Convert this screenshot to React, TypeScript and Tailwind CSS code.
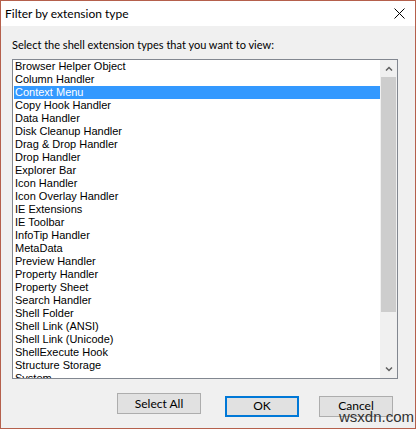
import React from "react";

const EXTENSION_TYPES = [
  "Browser Helper Object",
  "Column Handler",
  "Context Menu",
  "Copy Hook Handler",
  "Data Handler",
  "Disk Cleanup Handler",
  "Drag & Drop Handler",
  "Drop Handler",
  "Explorer Bar",
  "Icon Handler",
  "Icon Overlay Handler",
  "IE Extensions",
  "IE Toolbar",
  "InfoTip Handler",
  "MetaData",
  "Preview Handler",
  "Property Handler",
  "Property Sheet",
  "Search Handler",
  "Shell Folder",
  "Shell Link (ANSI)",
  "Shell Link (Unicode)",
  "ShellExecute Hook",
  "Structure Storage",
  "System",
  "Thumbnail Handler",
  "URL Search Hook",
];

const SELECTED = "Context Menu";
const UI_FONT = { fontFamily: 'Lato, "Liberation Sans", sans-serif' };

function Chevron({ up }: { up?: boolean }) {
  return (
    <svg width="8" height="5" viewBox="0 0 8 5" fill="none" stroke="#606060" strokeWidth="1.5" aria-hidden="true">
      <path d={up ? "M1 4.5 4 1.5 7 4.5" : "M1 0.5 4 3.5 7 0.5"} />
    </svg>
  );
}

function DialogButton({ label, primary, width }: { label: string; primary?: boolean; width: string }) {
  return (
    <button
      style={UI_FONT}
      className={`h-[21px] ${width} bg-[#e1e1e1] text-[12px] leading-none text-black ${
        primary ? "border-2 border-[#0078d7]" : "border border-[#adadad]"
      }`}
    >
      {label}
    </button>
  );
}

export default function App() {
  return (
    <div
      className="relative flex h-[429px] w-[416px] flex-col overflow-hidden border border-[#b5604c] bg-[#f0f0f0] text-black"
      style={{ fontFamily: '"Liberation Sans", Arial, sans-serif' }}
    >
      {/* title bar */}
      <div className="flex h-[25px] shrink-0 items-center justify-between bg-white pl-[4px] pr-[10px]">
        <span className="text-[12px]" style={UI_FONT}>
          Filter by extension type
        </span>
        <svg width="11" height="11" viewBox="0 0 11 11" stroke="#000" strokeWidth="1" aria-hidden="true">
          <path d="M0.5 0.5 10.5 10.5M10.5 0.5 0.5 10.5" />
        </svg>
      </div>

      <div className="flex flex-1 flex-col px-[11px] pt-[11px]">
        <p className="text-[11px] leading-[16px]" style={UI_FONT}>
          Select the shell extension types that you want to view:
        </p>

        {/* list box */}
        <div className="mt-[6px] flex h-[320px] w-[386px] border border-[#828790] bg-white">
          <ul className="flex-1 overflow-hidden pl-[1px] text-[11px]">
            {EXTENSION_TYPES.map((name) => (
              <li
                key={name}
                className={`h-[13px] whitespace-nowrap pl-[1px] leading-[13px] ${
                  name === SELECTED ? "bg-[#3399ff] text-white" : ""
                }`}
              >
                {name}
              </li>
            ))}
          </ul>
          <div className="flex w-[17px] flex-col bg-[#f0f0f0]">
            <div className="flex h-[17px] items-center justify-center">
              <Chevron up />
            </div>
            <div className="ml-[1px] h-[235px] w-[15px] bg-[#cdcdcd]" />
            <div className="flex-1" />
            <div className="flex h-[17px] items-center justify-center">
              <Chevron />
            </div>
          </div>
        </div>

        <div className="mt-[14px] flex justify-end pr-[11px]">
          <DialogButton label="Select All" width="w-[84px]" />
          <div className="ml-[24px]">
            <DialogButton label="OK" primary width="w-[74px]" />
          </div>
          <div className="ml-[20px]">
            <DialogButton label="Cancel" width="w-[74px]" />
          </div>
        </div>
      </div>

      <span className="absolute left-[338px] top-[408px] text-[15px] leading-[16px] text-[#333]">wsxdn.com</span>
    </div>
  );
}
